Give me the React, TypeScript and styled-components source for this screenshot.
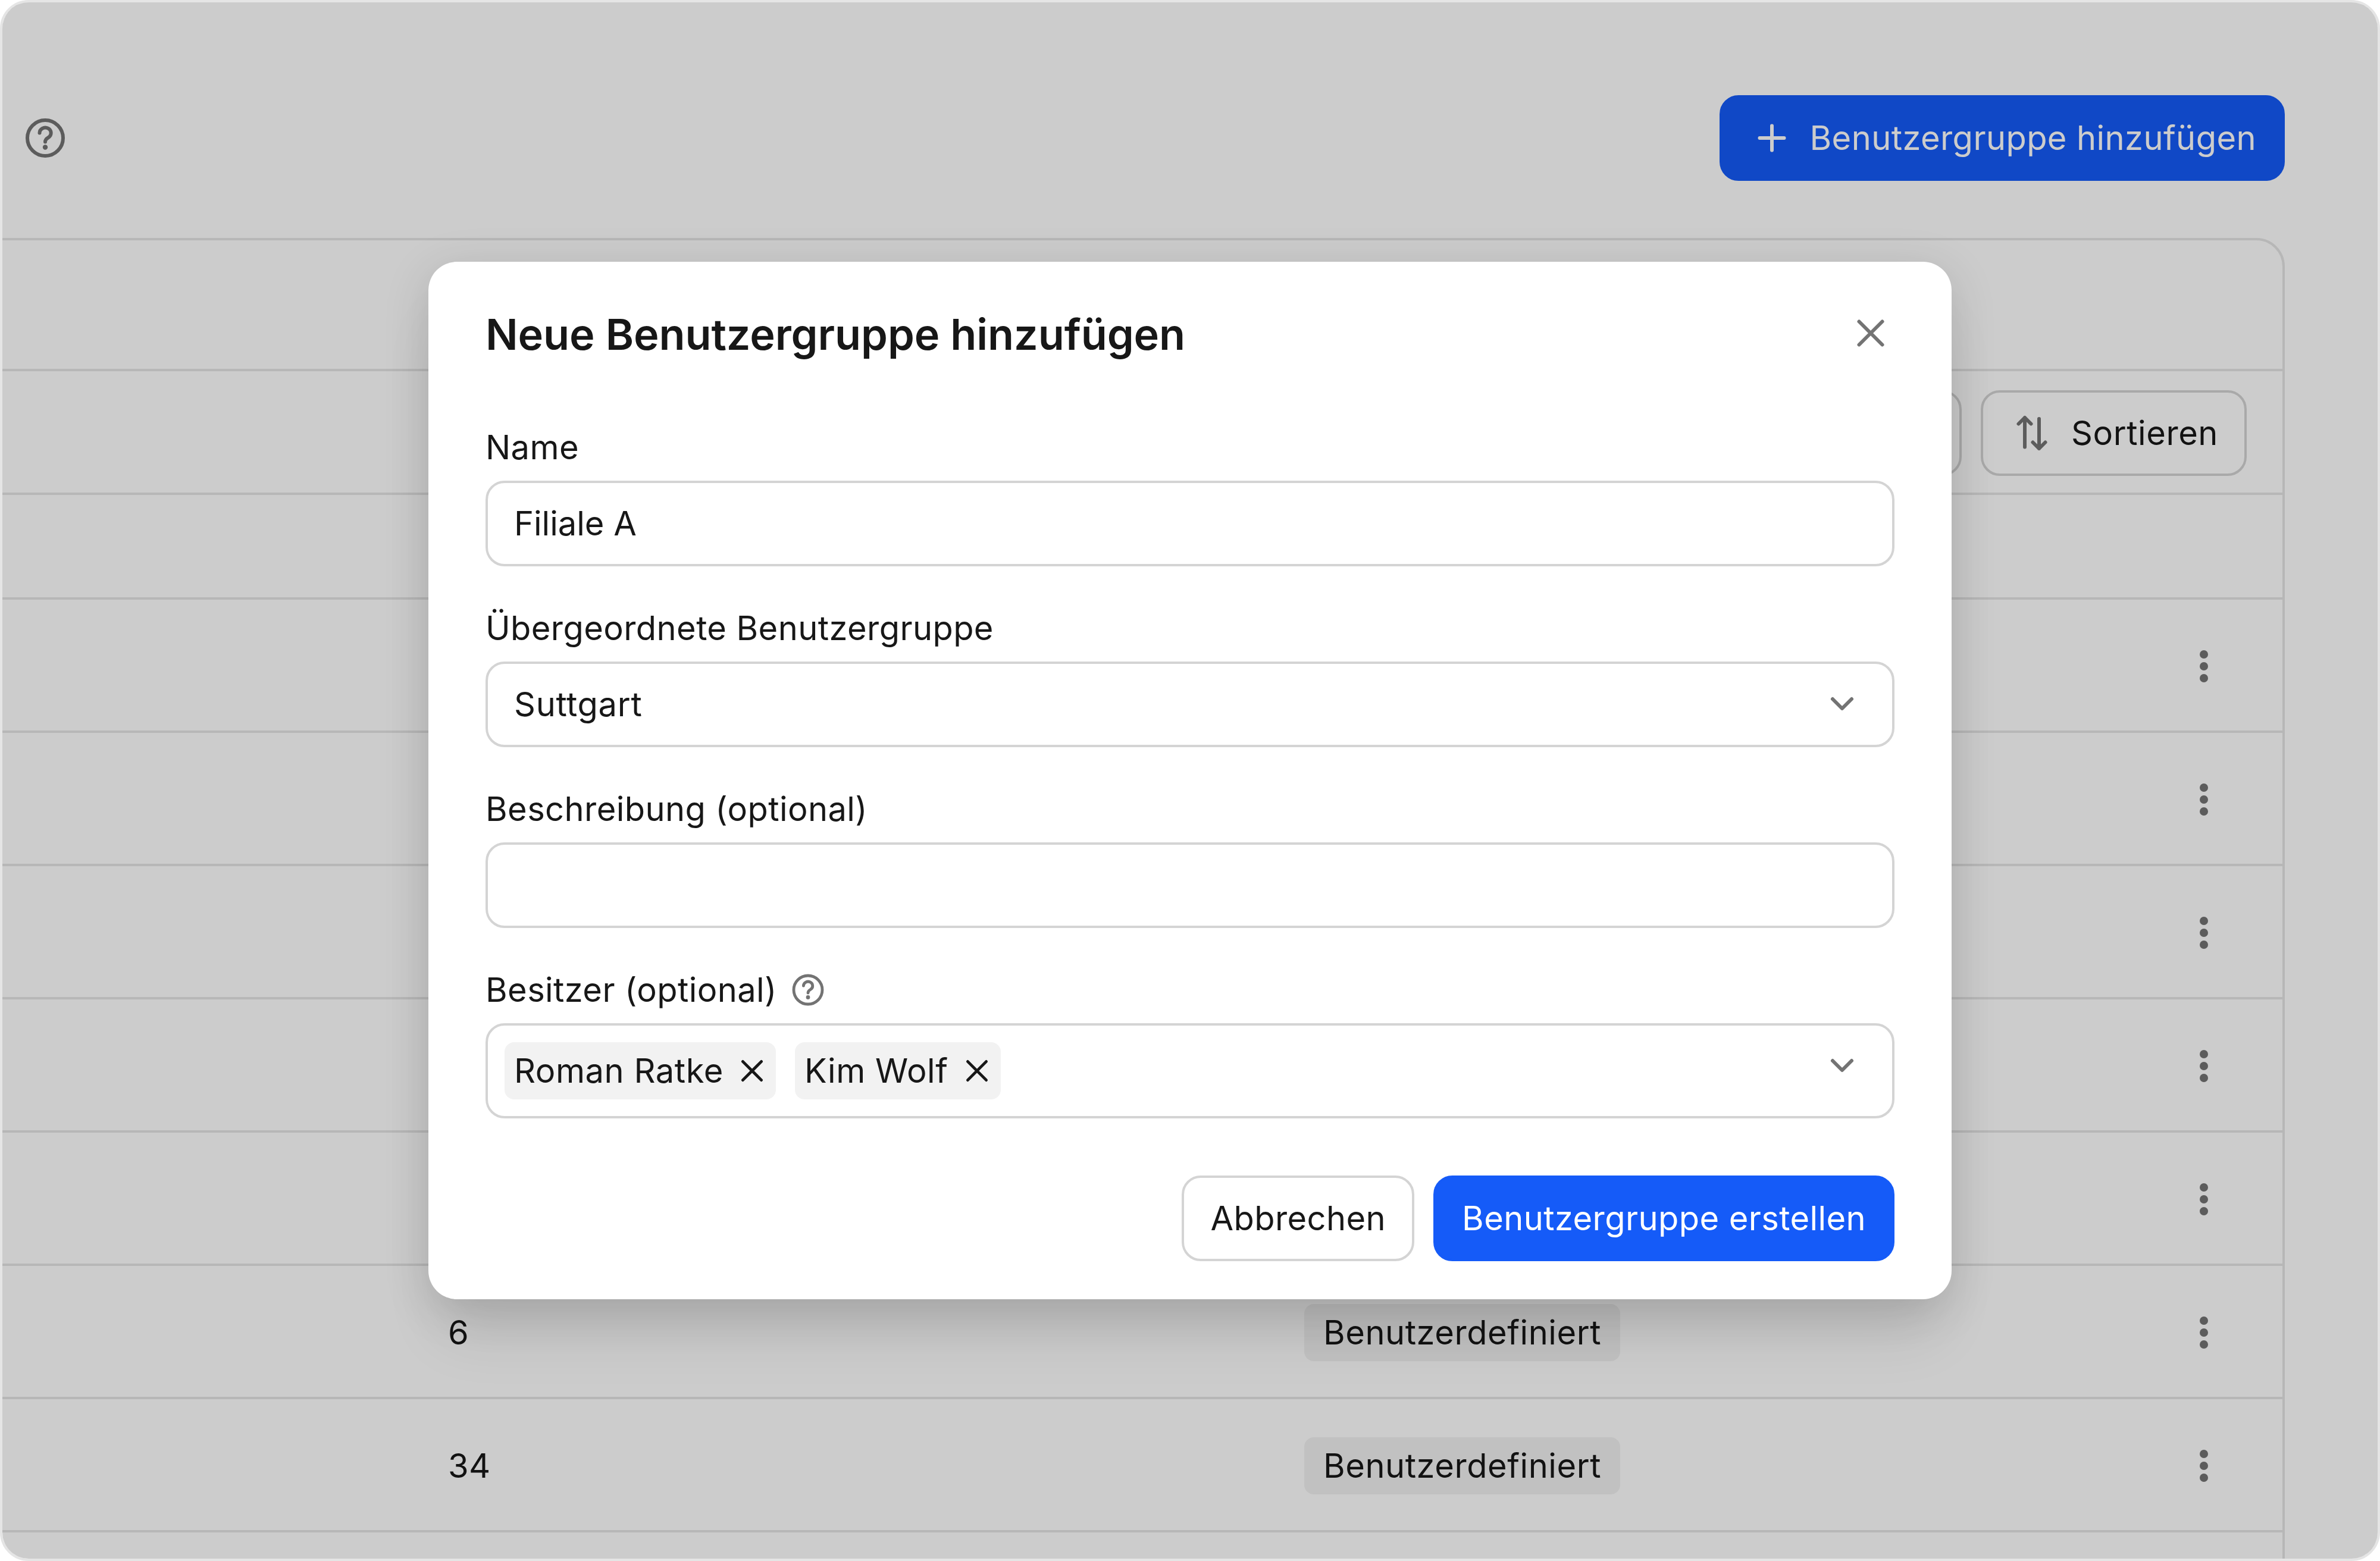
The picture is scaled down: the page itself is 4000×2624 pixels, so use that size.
import React from "react";
import styled, { createGlobalStyle } from "styled-components";

const GlobalStyle = createGlobalStyle`
html, body {
  margin: 0;
  padding: 0;
  background: #ffffff;
}

body {
  font-family: Inter, "Liberation Sans", sans-serif;
  font-size: 56px;
  line-height: 80px;
  letter-spacing: 0.42px;
  color: #171717;
}

* {
  box-sizing: border-box;
}

button, input {
  font: inherit;
  letter-spacing: inherit;
  color: inherit;
}
`;

const rows = [
  {},
  {},
  {},
  {},
  {},
  { count: "6", kind: "Benutzerdefiniert" },
  { count: "34", kind: "Benutzerdefiniert" },
  {},
];

const Icon = ({ size = 80, width = 6, children }: { size?: number; width?: number; children: React.ReactNode }) => (
  <Glyph $size={size} viewBox="0 0 80 80" strokeWidth={width}>
    {children}
  </Glyph>
);

const HelpIcon = ({ size }: { size?: number }) => (
  <Icon size={size}>
    <circle cx="40" cy="40" r="30" />
    <path d="M30.5 31.5a9.6 9 0 1 1 14.8 7.6c-3.4 2-5.3 3.6-5.3 7.4" />
    <circle cx="40" cy="55.5" r="2.2" fill="currentColor" strokeWidth="4" />
  </Icon>
);

const CloseIcon = ({ size }: { size?: number }) => (
  <Icon size={size}>
    <path d="M20.5 20.5l39 39M59.5 20.5l-39 39" />
  </Icon>
);

const ChevronIcon = () => (
  <Icon>
    <path d="M24 31l16 16 16-16" />
  </Icon>
);

const PlusIcon = () => (
  <Icon>
    <path d="M40 19.5v41M19.5 40h41" />
  </Icon>
);

const SortIcon = () => (
  <Icon>
    <path d="M26 63.5V14M15.5 24.5L26 14l10.5 10.5" />
    <path d="M50 16v50M39.5 55.5L50 66l10.5-10.5" />
  </Icon>
);

const DotsIcon = () => (
  <KebabSvg viewBox="0 0 80 80">
    <circle cx="40" cy="20" r="7" />
    <circle cx="40" cy="40" r="7" />
    <circle cx="40" cy="60" r="7" />
  </KebabSvg>
);

export default function App() {
  return (
    <>
      <GlobalStyle />
      <Frame>
        <Header>
          <Muted>
            <HelpIcon />
          </Muted>
          <Button $primary>
            <PlusIcon />
            Benutzergruppe hinzufügen
          </Button>
        </Header>
        <Card>
          <CardTitle />
          <Toolbar>
            <Button aria-hidden="true">&nbsp;</Button>
            <Button>
              <Muted>
                <SortIcon />
              </Muted>
              <SortLabel>Sortieren</SortLabel>
            </Button>
          </Toolbar>
          <TableHead />
          {rows.map((row, i) => (
            <Row key={i}>
              <span>{row.count}</span>
              <div>{row.kind && <Badge>{row.kind}</Badge>}</div>
              <Muted>
                <DotsIcon />
              </Muted>
            </Row>
          ))}
        </Card>
        <Overlay>
          <Modal>
            <ModalHead>
              <Title>Neue Benutzergruppe hinzufügen</Title>
              <Muted>
                <CloseIcon />
              </Muted>
            </ModalHead>
            <Form>
              <Field>
                <Label>Name</Label>
                <Input defaultValue="Filiale A" />
              </Field>
              <Field>
                <Label>Übergeordnete Benutzergruppe</Label>
                <Select>
                  Suttgart
                  <Muted>
                    <ChevronIcon />
                  </Muted>
                </Select>
              </Field>
              <Field>
                <Label>Beschreibung (optional)</Label>
                <Input />
              </Field>
              <Field>
                <Label>
                  Besitzer (optional)
                  <Muted>
                    <HelpIcon size={64} />
                  </Muted>
                </Label>
                <MultiSelect>
                  <Chips>
                    <Chip>
                      Roman Ratke
                      <CloseIcon size={64} />
                    </Chip>
                    <Chip>
                      Kim Wolf
                      <CloseIcon size={64} />
                    </Chip>
                  </Chips>
                  <Muted>
                    <ChevronIcon />
                  </Muted>
                </MultiSelect>
              </Field>
            </Form>
            <Footer>
              <Button $white>Abbrechen</Button>
              <Button $primary>Benutzergruppe erstellen</Button>
            </Footer>
          </Modal>
        </Overlay>
      </Frame>
    </>
  );
}

const Frame = styled.div`
  position: relative;
  width: 4000px;
  height: 2624px;
  overflow: hidden;
  background: #ffffff;
  border: 4px solid #e5e5e5;
  border-radius: 48px;
`;

const Overlay = styled.div`
  position: absolute;
  inset: 0;
  display: flex;
  align-items: center;
  justify-content: center;
  background: rgba(0, 0, 0, 0.2);
`;

const Header = styled.header`
  display: flex;
  align-items: center;
  justify-content: space-between;
  padding: 156px 156px 96px 32px;
`;

const Glyph = styled.svg<{ $size: number }>`
  display: block;
  flex: none;
  width: ${({ $size }) => $size}px;
  height: ${({ $size }) => $size}px;
  fill: none;
  stroke: currentColor;
  stroke-linecap: round;
  stroke-linejoin: round;
`;

const KebabSvg = styled.svg`
  display: block;
  width: 80px;
  height: 80px;
  fill: currentColor;
`;

const Muted = styled.span`
  display: block;
  flex: none;
  color: #737373;
`;

const Button = styled.button<{ $primary?: boolean; $white?: boolean }>`
  display: flex;
  align-items: center;
  gap: 24px;
  height: 144px;
  padding: 0 44px;
  background: ${({ $primary, $white }) => ($primary ? "#155bf8" : $white ? "#ffffff" : "transparent")};
  border: 4px solid ${({ $primary }) => ($primary ? "#155bf8" : "#d4d4d4")};
  border-radius: 32px;
  color: ${({ $primary }) => ($primary ? "#ffffff" : "#171717")};
  white-space: nowrap;
`;

const SortLabel = styled.span`
  letter-spacing: 0.56px;
`;

const Card = styled.section`
  margin: 0 156px 0 -48px;
  background: #ffffff;
  border: 4px solid #e5e5e5;
  border-radius: 48px;
`;

const CardTitle = styled.div`
  height: 220px;
  border-bottom: 4px solid #e5e5e5;
`;

const Toolbar = styled.div`
  display: flex;
  justify-content: flex-end;
  gap: 32px;
  height: 208px;
  padding: 32px 60px 28px 0;
  border-bottom: 4px solid #e5e5e5;
`;

const TableHead = styled.div`
  height: 176px;
  border-bottom: 4px solid #e5e5e5;
`;

const Row = styled.div`
  display: grid;
  grid-template-columns: 1439px 1fr 80px;
  align-items: center;
  height: 224px;
  padding: 0 92px 0 793px;
  box-shadow: inset 0 -4px 0 #e5e5e5;
`;

const Badge = styled.span`
  display: inline-block;
  height: 96px;
  padding: 0 32px;
  background: #f2f2f2;
  border-radius: 16px;
  line-height: 96px;
  letter-spacing: 0.56px;
`;

const Modal = styled.div`
  width: 2560px;
  padding: 80px 96px 64px;
  background: #ffffff;
  border-radius: 48px;
  box-shadow: 0 80px 100px -20px rgba(0, 0, 0, 0.09), 0 16px 80px rgba(0, 0, 0, 0.14);
`;

const ModalHead = styled.div`
  display: flex;
  align-items: center;
  justify-content: space-between;
  height: 80px;
  margin-bottom: 112px;
`;

const Title = styled.h2`
  margin: 0;
  padding-top: 3px;
  font-size: 72px;
  font-weight: 600;
  line-height: 80px;
  letter-spacing: -0.08px;
`;

const Form = styled.div`
  display: flex;
  flex-direction: column;
  gap: 64px;
`;

const Field = styled.div`
  display: flex;
  flex-direction: column;
  gap: 16px;
`;

const Label = styled.label`
  display: flex;
  align-items: center;
  gap: 20px;
  height: 80px;
`;

const Input = styled.input`
  display: block;
  width: 100%;
  height: 144px;
  padding: 0 44px;
  background: #ffffff;
  border: 4px solid #d4d4d4;
  border-radius: 32px;
  letter-spacing: 0;
  outline: none;
`;

const Select = styled.div`
  display: flex;
  align-items: center;
  justify-content: space-between;
  height: 144px;
  padding: 0 44px;
  border: 4px solid #d4d4d4;
  border-radius: 32px;
  letter-spacing: 0.7px;
`;

const MultiSelect = styled.div`
  display: flex;
  align-items: flex-start;
  justify-content: space-between;
  height: 160px;
  padding: 28px 44px 28px 28px;
  border: 4px solid #d4d4d4;
  border-radius: 32px;
`;

const Chips = styled.div`
  display: flex;
  gap: 32px;
  letter-spacing: 0.56px;
`;

const Chip = styled.span`
  display: flex;
  align-items: center;
  gap: 16px;
  height: 96px;
  padding: 0 8px 0 16px;
  background: #f2f2f2;
  border-radius: 16px;
`;

const Footer = styled.div`
  display: flex;
  justify-content: flex-end;
  gap: 32px;
  margin-top: 96px;
`;
